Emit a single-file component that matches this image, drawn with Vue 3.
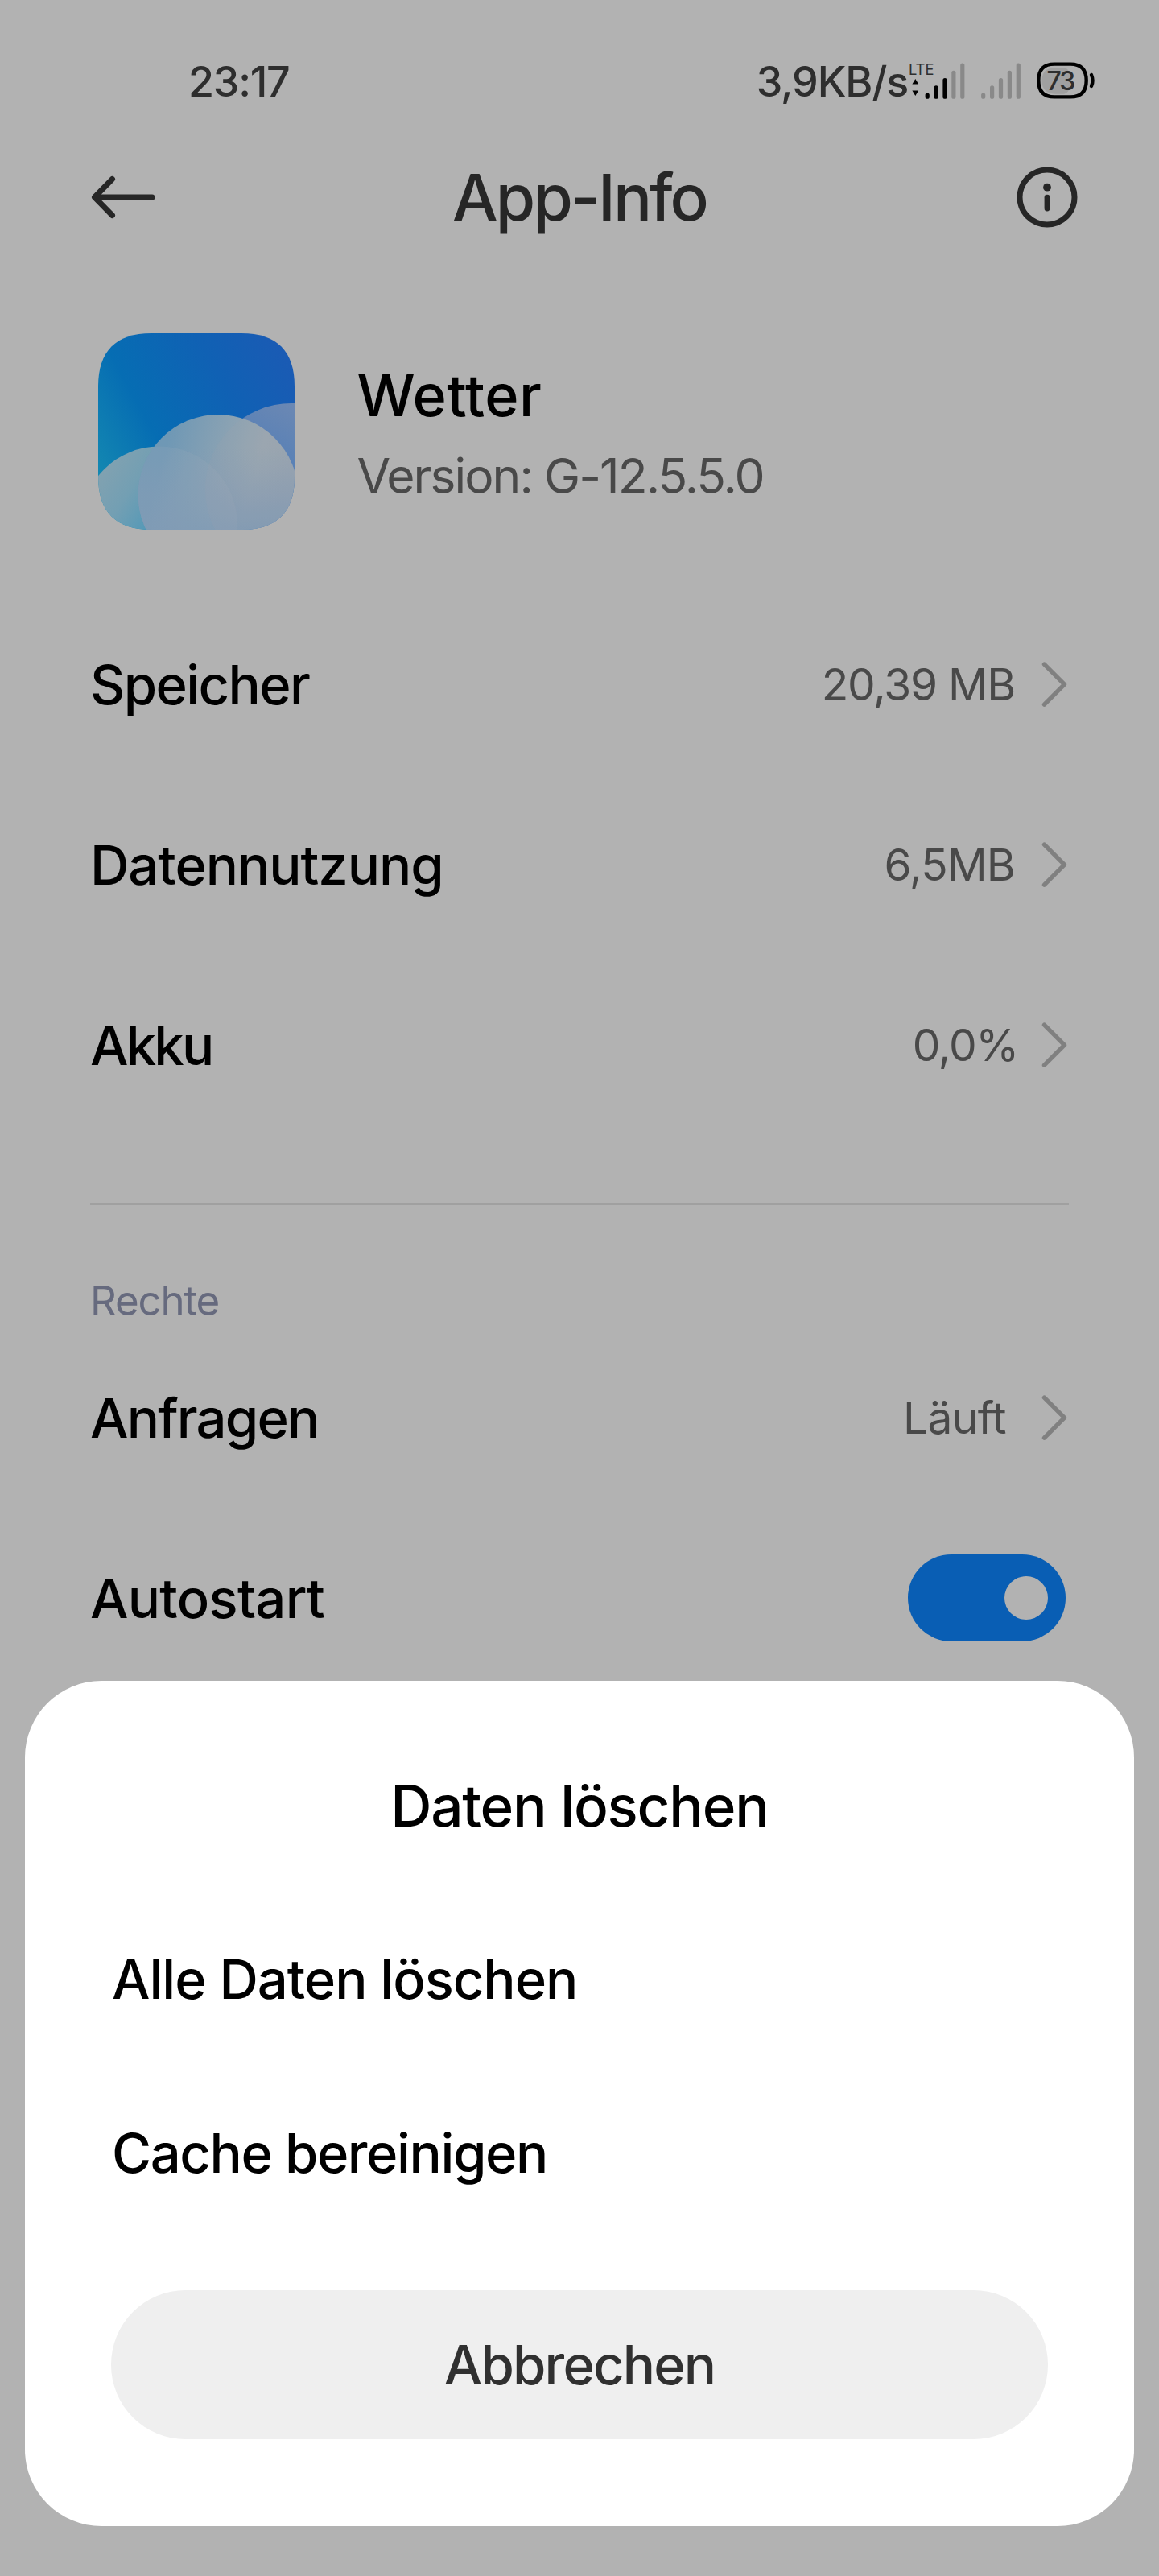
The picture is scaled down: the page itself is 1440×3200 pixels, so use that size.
<template>
  <div class="screen">
    <header class="status">
      <span class="clock">23:17</span>
      <span class="speed">3,9KB/s</span>
      <svg class="indicators" viewBox="0 0 232 62" aria-hidden="true">
        <text class="lte" x="-1" y="23.3">LTE</text>
        <path d="M7.3 28 L11.2 34.5 H3.4 Z M7.3 49 L11.2 42.5 H3.4 Z" />
        <line
          v-for="(b, i) in bars"
          :key="'a' + i"
          class="bar"
          :class="{ weak: i > 2 }"
          :x1="22.2 + i * 10.9"
          :x2="22.2 + i * 10.9"
          :y1="b"
          y2="50.2"
        />
        <line
          v-for="(b, i) in bars"
          :key="'b' + i"
          class="bar weak"
          :x1="91.7 + i * 10.9"
          :x2="91.7 + i * 10.9"
          :y1="b"
          y2="50.2"
        />
        <path class="charge" d="M181 14 H192 Q200 15.5 200 30 Q200 45 192 46.7 H181 Q164.5 46 164.5 30.3 Q164.5 14.5 181 14 Z" />
        <path class="cell" d="M180 9.6 H200 Q219.7 9.6 219.7 30 Q219.7 50.4 200 50.4 H180 Q160.3 50.4 160.3 30 Q160.3 9.6 180 9.6 Z" />
        <path class="nub" d="M226 23 Q229 30 226 37" />
        <text class="percent" x="170.5" y="42">73</text>
      </svg>
    </header>

    <nav class="topbar">
      <svg class="back" viewBox="0 0 90 70" aria-label="Zurück">
        <path d="M28.5 12.5 L6.5 35 L28.5 57.5 M7 35 H78" />
      </svg>
      <h1>App-Info</h1>
      <svg class="info" viewBox="0 0 76 76" aria-label="Info">
        <circle class="ring" cx="38" cy="38" r="34" />
        <circle cx="38" cy="25.7" r="4.9" />
        <rect x="34.6" y="34.8" width="6.8" height="20.6" rx="3.4" />
      </svg>
    </nav>

    <section class="profile">
      <svg class="app-icon" viewBox="0 0 244 244" aria-hidden="true">
        <defs>
          <linearGradient id="sky" x1="0" y1="0.75" x2="1" y2="0.2">
            <stop offset="0" stop-color="#1489b1" />
            <stop offset="0.32" stop-color="#066db3" />
            <stop offset="0.7" stop-color="#1061b4" />
            <stop offset="1" stop-color="#1a5bb4" />
          </linearGradient>
          <linearGradient id="left-cloud" x1="0" y1="0.1" x2="0.75" y2="0.6">
            <stop offset="0.1" stop-color="#84a2b0" />
            <stop offset="0.4" stop-color="#739fb3" />
            <stop offset="0.7" stop-color="#4f98b8" />
          </linearGradient>
          <linearGradient id="right-cloud" x1="0.6" y1="0" x2="0.3" y2="0.5">
            <stop offset="0" stop-color="#6e89b3" />
            <stop offset="1" stop-color="#4c7cb8" />
          </linearGradient>
          <linearGradient id="front-cloud" x1="0.2" y1="0.1" x2="0.95" y2="0.3">
            <stop offset="0" stop-color="#6f98b5" />
            <stop offset="0.45" stop-color="#8aa2b3" />
            <stop offset="0.75" stop-color="#9aa7b1" />
            <stop offset="1" stop-color="#98a4b0" />
          </linearGradient>
          <linearGradient id="haze" x1="0" y1="0" x2="0" y2="1">
            <stop offset="0.2" stop-color="#8099b4" stop-opacity="0" />
            <stop offset="0.72" stop-color="#7b98b4" stop-opacity="0.85" />
          </linearGradient>
          <clipPath id="tile">
            <path d="M66 0 H178 C222 0 244 22 244 66 V178 C244 222 222 244 178 244 H66 C22 244 0 222 0 178 V66 C0 22 22 0 66 0 Z" />
          </clipPath>
          <clipPath id="front">
            <circle cx="149" cy="200.5" r="99.5" />
          </clipPath>
        </defs>
        <g clip-path="url(#tile)">
          <rect width="244" height="244" fill="url(#sky)" />
          <circle cx="240" cy="194" r="107" fill="url(#right-cloud)" />
          <circle cx="76" cy="237.5" r="97" fill="url(#left-cloud)" />
          <circle cx="149" cy="200.5" r="99.5" fill="url(#front-cloud)" />
          <circle cx="149" cy="200.5" r="99.5" fill="url(#haze)" />
          <g clip-path="url(#front)">
            <circle cx="76" cy="237.5" r="97" fill="#9fb0b8" opacity="0.16" />
            <circle cx="240" cy="194" r="107" fill="#a8a8b0" opacity="0.12" />
          </g>
        </g>
      </svg>
      <div class="profile-text">
        <div class="app-name">Wetter</div>
        <div class="app-version">Version: G-12.5.5.0</div>
      </div>
    </section>

    <div v-for="r in usage" :key="r.label" class="row">
      <span class="label" :style="{ letterSpacing: r.track + 'px' }">{{ r.label }}</span>
      <span class="value" :style="{ letterSpacing: r.valueTrack + 'px', marginRight: r.inset + 'px' }">{{ r.value }}</span>
      <svg class="chevron" viewBox="0 0 36 60" aria-hidden="true"><path d="M5.5 5.2 L30.5 30.2 L5.5 55.2" /></svg>
    </div>

    <hr class="divider" />
    <h2>Rechte</h2>

    <div class="row">
      <span class="label requests">Anfragen</span>
      <span class="value running">Läuft</span>
      <svg class="chevron" viewBox="0 0 36 60" aria-hidden="true"><path d="M5.5 5.2 L30.5 30.2 L5.5 55.2" /></svg>
    </div>
    <div class="row">
      <span class="label autostart">Autostart</span>
      <button
        class="switch"
        :class="{ on: autostart }"
        role="switch"
        :aria-checked="autostart"
        @click="autostart = !autostart"
      >
        <span class="knob"></span>
      </button>
    </div>

    <div class="sheet" role="dialog" aria-label="Daten löschen">
      <div class="sheet-title">Daten löschen</div>
      <div class="option all">Alle Daten löschen</div>
      <div class="option cache">Cache bereinigen</div>
      <button class="cancel">Abbrechen</button>
    </div>
  </div>
</template>

<script setup>
import { ref } from 'vue'

const autostart = ref(true)

// top end of each signal bar, shortest first
const bars = [48, 38.8, 29.6, 20.3, 11]

const usage = [
  { label: 'Speicher', track: -1.6, value: '20,39 MB', valueTrack: -1.28, inset: 31 },
  { label: 'Datennutzung', track: -1.05, value: '6,5MB', valueTrack: -0.8, inset: 31 },
  { label: 'Akku', track: -2.8, value: '0,0%', valueTrack: -1.3, inset: 27 },
]
</script>

<style>
body {
  margin: 0;
  background: #b2b2b2;
}
</style>

<style scoped>
.screen {
  position: relative;
  width: 1440px;
  height: 3200px;
  overflow: hidden;
  background: #b2b2b2;
  color: #000;
  font-family: Inter, 'Noto Sans', sans-serif;
  font-weight: 500;
  white-space: nowrap;
}

.status {
  display: flex;
  align-items: center;
  height: 202px;
  padding: 0 78px 0 234px;
  box-sizing: border-box;
  font-size: 52px;
  color: #2e2e2e;
}

.clock {
  letter-spacing: -1.25px;
}

.speed {
  margin-left: auto;
  margin-right: 2px;
  letter-spacing: -1.2px;
}

.indicators {
  width: 232px;
  height: 62px;
  overflow: visible;
  fill: #000;
}

.lte {
  font-size: 18.3px;
  font-weight: 400;
  fill: #2e2e2e;
}

.bar {
  stroke: #000;
  stroke-width: 5.2;
  stroke-linecap: round;
}

.bar.weak {
  stroke: #898989;
}

.cell,
.nub {
  fill: none;
  stroke: #000;
  stroke-width: 4.4;
  stroke-linecap: round;
}

.charge {
  fill: #a0a0a0;
}

.percent {
  font-size: 32px;
  letter-spacing: -2px;
  fill: #2e2e2e;
}

.topbar {
  display: grid;
  grid-template-columns: 1fr auto 1fr;
  align-items: center;
  height: 86px;
  padding: 0 101px;
  color: #262626;
}

.back {
  width: 90px;
  height: 70px;
  margin-left: 10px;
  fill: none;
  stroke: #262626;
  stroke-width: 7;
  stroke-linecap: round;
  stroke-linejoin: round;
}

.topbar h1 {
  margin: 0;
  font-size: 80px;
  line-height: 86px;
  font-weight: 500;
  letter-spacing: -2.88px;
}

.info {
  justify-self: end;
  width: 76px;
  height: 76px;
  fill: #262626;
}

.ring {
  fill: none;
  stroke: #262626;
  stroke-width: 7;
}

.profile {
  display: flex;
  height: 450px;
  padding: 126px 112px 0 121.5px;
  box-sizing: border-box;
}

.app-icon {
  width: 244px;
  height: 244px;
}

.profile-text {
  margin: 27px 0 0 78px;
  line-height: 100px;
}

.app-name {
  font-size: 72px;
  letter-spacing: 0.4px;
}

.app-version {
  font-size: 60.5px;
  font-weight: 400;
  letter-spacing: -1.92px;
  color: #494949;
}

.row {
  display: flex;
  align-items: center;
  height: 224px;
  padding: 0 112px;
}

.label {
  margin-right: auto;
  font-size: 67px;
}

.requests {
  letter-spacing: -1.82px;
}

.autostart {
  letter-spacing: -0.72px;
}

.value {
  font-size: 55px;
  font-weight: 400;
  color: #494949;
}

.running {
  margin-right: 42px;
  letter-spacing: -0.6px;
}

.chevron {
  width: 36px;
  height: 60px;
  fill: none;
  stroke: #808080;
  stroke-width: 5.4;
  stroke-linecap: round;
  stroke-linejoin: round;
}

.divider {
  height: 3px;
  margin: 84px 112px 0;
  border: 0;
  background: #a0a0a0;
}

h2 {
  margin: 0;
  padding: 85px 112px 0;
  font-size: 51px;
  line-height: 67px;
  font-weight: 400;
  letter-spacing: -1.16px;
  color: #666a7e;
}

.switch {
  display: flex;
  align-items: center;
  width: 196px;
  height: 108px;
  margin: 0 4px 0 0;
  padding: 0 22px;
  border: 0;
  border-radius: 54px;
  background: #9a9a9a;
}

.switch.on {
  justify-content: flex-end;
  background: #095eb4;
}

.knob {
  width: 54px;
  height: 54px;
  border-radius: 50%;
  background: #b2b2b2;
}

/* Bottom sheet floats above the settings list. */
.sheet {
  position: absolute;
  left: 31px;
  right: 31px;
  bottom: 62px;
  display: flex;
  flex-direction: column;
  height: 1050px;
  padding: 47px 107px 0;
  box-sizing: border-box;
  border-radius: 95px;
  background: #fff;
}

.sheet-title {
  font-size: 71px;
  line-height: 216px;
  letter-spacing: -1.23px;
  text-align: center;
}

.option {
  padding-left: 1px;
  font-size: 67px;
  line-height: 216px;
}

.all {
  letter-spacing: -1.02px;
}

.cache {
  letter-spacing: -1.41px;
}

.cancel {
  height: 185px;
  margin-top: 62px;
  padding: 0;
  border: 0;
  border-radius: 93px;
  background: #efefef;
  color: #303030;
  font: 500 67px Inter, 'Noto Sans', sans-serif;
  letter-spacing: -1.83px;
}
</style>
